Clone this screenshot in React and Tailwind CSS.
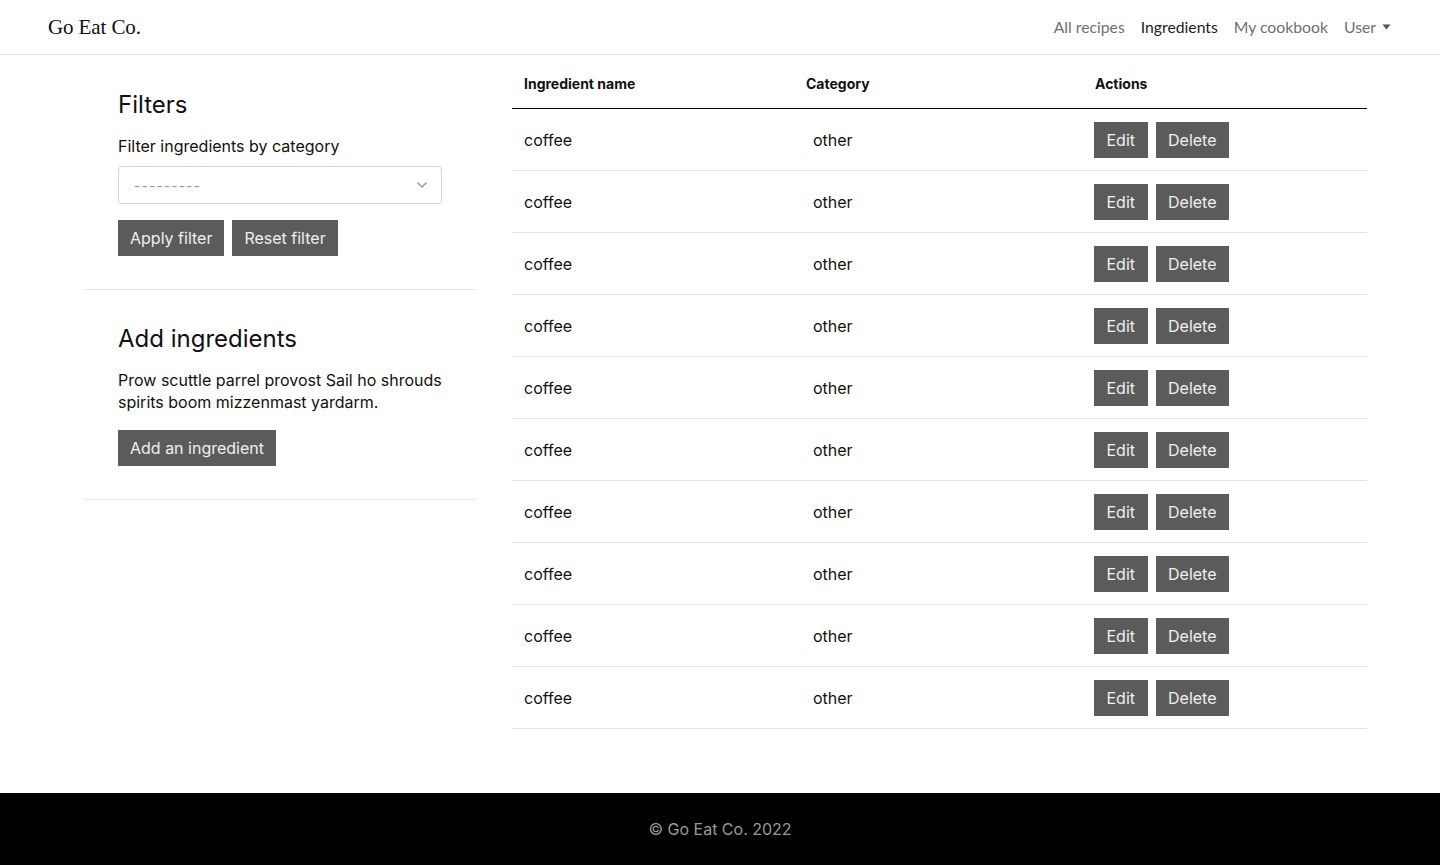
import React from "react";

const rows = Array.from({ length: 10 }, () => ({ name: "coffee", category: "other" }));

function Btn({ children, className = "" }) {
  return (
    <button className={"h-9 bg-[#5b5b5b] px-3 text-[16px] text-white/90 " + className}>{children}</button>
  );
}

export default function App() {
  return (
    <div className="min-h-[865px] flex flex-col bg-white text-[#111]" style={{ fontFamily: "Inter, 'Noto Sans', sans-serif" }}>
      <header className="h-[55px] border-b border-[#e3e3e3] flex items-center justify-between pl-12 pr-[49px]">
        <div className="text-[21px] text-[#111] tracking-[-0.1px] pt-px" style={{ fontFamily: "'Liberation Serif', 'DejaVu Serif', serif" }}>Go Eat Co.</div>
        <nav className="flex items-center gap-4 text-[15.75px] text-[#707070]" style={{ fontFamily: "Lato, 'Open Sans', sans-serif" }}>
          <span>All recipes</span>
          <span className="text-[#222]">Ingredients</span>
          <span>My cookbook</span>
          <span className="flex items-center gap-[6px]">User
            <svg width="9" height="6" viewBox="0 0 9 6"><path d="M0.5 0.5 L8.5 0.5 L4.5 5.5 Z" fill="#555" /></svg>
          </span>
        </nav>
      </header>

      <main className="flex-1 flex pl-[85px] pb-16">
        <aside className="w-[390px] shrink-0">
          <section className="border-b border-[#e3e3e3] px-[33px] pt-[36px] pb-[33px]">
            <h2 className="text-[24px] leading-[28px] mb-[15px]">Filters</h2>
            <label className="block text-[16px] leading-[24px] mb-2">Filter ingredients by category</label>
            <div className="h-[38px] w-[324px] border border-[#ced4da] rounded-[4px] flex items-center justify-between pl-[15px] pr-[13px]">
              <span className="text-[#999] text-[14px] tracking-[1px]">---------</span>
              <svg width="12" height="8" viewBox="0 0 12 8"><path d="M1.5 1.5 L6 6 L10.5 1.5" fill="none" stroke="#999" strokeWidth="1.5" /></svg>
            </div>
            <div className="flex gap-2 mt-4">
              <Btn>Apply filter</Btn>
              <Btn>Reset filter</Btn>
            </div>
          </section>
          <section className="border-b border-[#e3e3e3] px-[33px] pt-[34px] pb-[33px]">
            <h2 className="text-[24px] leading-[30px] mb-[15px]">Add ingredients</h2>
            <p className="text-[16px] leading-[22px] mb-[17px]">Prow scuttle parrel provost Sail ho shrouds spirits boom mizzenmast yardarm.</p>
            <Btn>Add an ingredient</Btn>
          </section>
        </aside>

        <div className="ml-[37px] w-[855px]">
          <table className="w-full border-collapse">
            <thead>
              <tr className="border-b-[1.5px] border-black h-[53px]">
                <th className="w-[282px] text-left text-[14px] font-bold pl-3 pt-[4px]">Ingredient name</th>
                <th className="w-[289px] text-left text-[14px] font-bold pl-3 pt-[4px]">Category</th>
                <th className="text-left text-[14px] font-bold pl-3 pt-[4px]">Actions</th>
              </tr>
            </thead>
            <tbody>
              {rows.map((r, i) => (
                <tr key={i} className="border-b border-[#e3e3e3] h-[62px]">
                  <td className="pl-3 pt-px text-[16px]">{r.name}</td>
                  <td className="pl-[19px] pt-px text-[16px]">{r.category}</td>
                  <td className="pl-[11px] pt-px">
                    <div className="flex gap-2">
                      <Btn className="px-[12.5px]">Edit</Btn>
                      <Btn className="px-[12.5px]">Delete</Btn>
                    </div>
                  </td>
                </tr>
              ))}
            </tbody>
          </table>
        </div>
      </main>

      <footer className="h-[72px] bg-black flex items-center justify-center text-[16px] text-[#9a9a9a]">
        © Go Eat Co. 2022
      </footer>
    </div>
  );
}
